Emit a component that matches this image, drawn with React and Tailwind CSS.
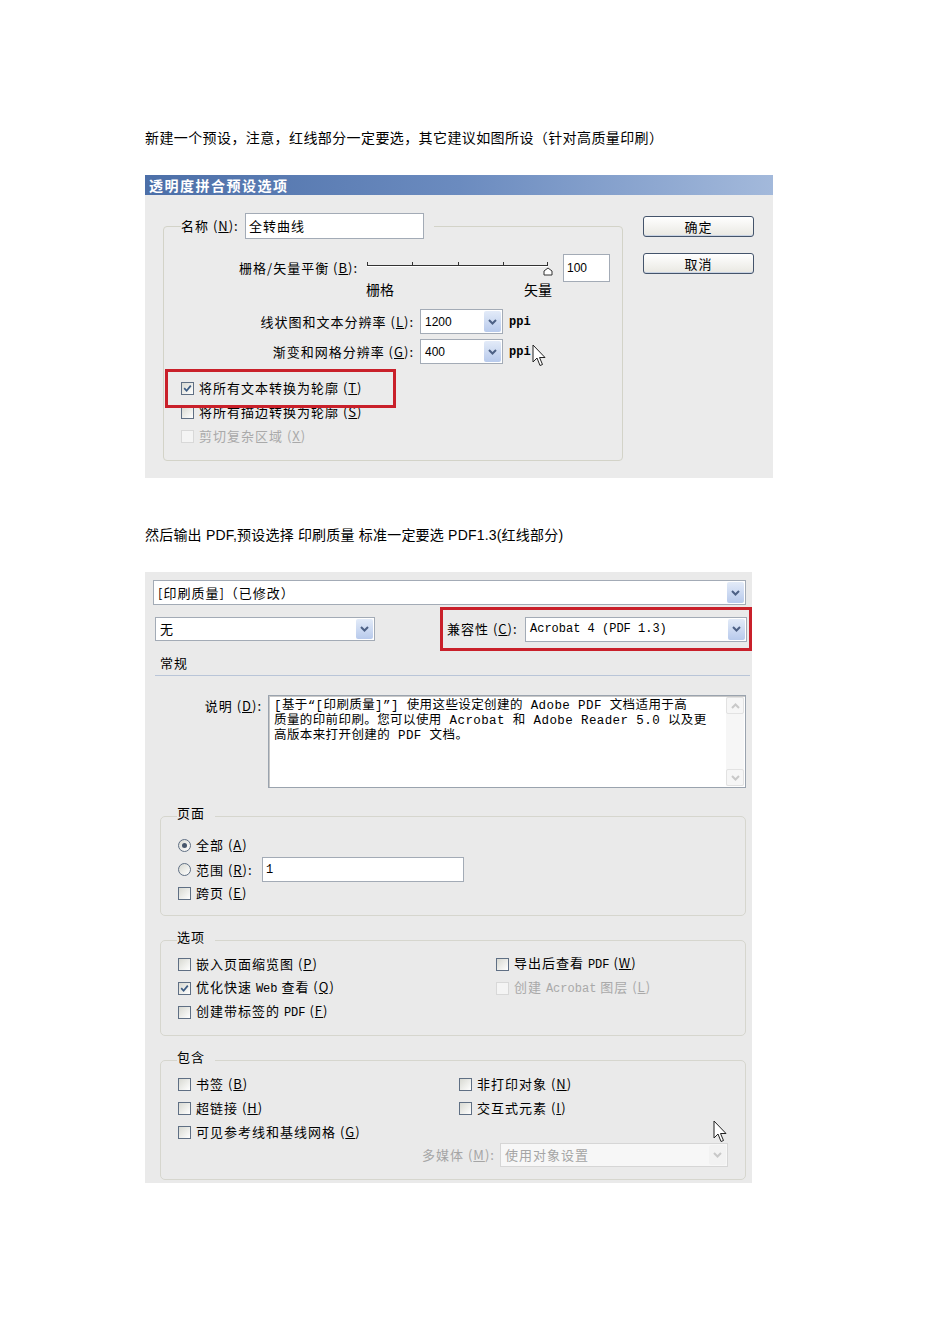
import React from "react";

const CJK = "font-['Noto_Sans_CJK_SC',sans-serif]";

function Chevron({ color = "#4d6185" }) {
  return (
    <svg width="9" height="6" viewBox="0 0 9 6">
      <path d="M1 1 L4.5 4.5 L8 1" stroke={color} strokeWidth="2" fill="none" />
    </svg>
  );
}

function Arrow({ disabled }) {
  return (
    <span
      className={`w-[17px] shrink-0 flex items-center justify-center rounded-[2px] ${
        disabled ? "bg-[#f2f2f2]" : "bg-linear-to-b from-[#e3ebf8] to-[#b8caec]"
      }`}
    >
      <Chevron color={disabled ? "#c8c8c8" : "#4d6185"} />
    </span>
  );
}

function Select({ className, children, textClass = "", disabled }) {
  return (
    <div
      className={`flex items-stretch border p-[1px] ${
        disabled ? "border-[#d6d6d6] bg-[#f7f7f7]" : "border-[#a3abb6] bg-white"
      } ${className}`}
    >
      <div className={`flex-1 flex items-center pl-[3px] whitespace-nowrap overflow-hidden ${textClass}`}>
        {children}
      </div>
      <Arrow disabled={disabled} />
    </div>
  );
}

function Check({ checked, disabled }) {
  return (
    <span
      className={`inline-flex w-[13px] h-[13px] shrink-0 items-center justify-center border ${
        disabled
          ? "border-[#d8d8d8] bg-[#f4f4f4]"
          : "border-[#5f6f84] bg-linear-to-br from-[#d8d9d2] to-white"
      }`}
    >
      {checked && (
        <svg width="9" height="9" viewBox="0 0 9 9">
          <path d="M1.2 4.2 L3.6 6.8 L7.8 1.6" stroke="#3a5a82" strokeWidth="1.7" fill="none" />
        </svg>
      )}
    </span>
  );
}

function Radio({ checked }) {
  return (
    <span className="inline-flex w-[13px] h-[13px] shrink-0 items-center justify-center rounded-full border border-[#5f6f84] bg-linear-to-br from-[#d8d9d2] to-white">
      {checked && <span className="w-[5px] h-[5px] rounded-full bg-[#46566b]" />}
    </span>
  );
}

function CheckRow({ checked, disabled, children }) {
  return (
    <div className={`flex items-center gap-[5px] h-4 leading-4 ${disabled ? "text-[#a9a9a9]" : "text-black"}`}>
      <Check checked={checked} disabled={disabled} />
      <span className="whitespace-nowrap">{children}</span>
    </div>
  );
}

function U({ children }) {
  return <span className="underline underline-offset-1">{children}</span>;
}

function Cursor() {
  return (
    <svg width="16" height="24" viewBox="0 0 16 24">
      <path
        d="M1 1 L1 18 L5 14 L8 21.5 L10.5 20.5 L7.5 13.5 L13 13.5 Z"
        fill="white"
        stroke="#222"
        strokeWidth="1"
        strokeLinejoin="round"
      />
    </svg>
  );
}

function Mono({ children, className = "" }) {
  return <span className={`font-['Liberation_Mono',monospace] tracking-normal ${className}`}>{children}</span>;
}

function Button({ children }) {
  return (
    <div className="w-[111px] h-[21px] border border-[#44546b] rounded-[3px] bg-linear-to-b from-white to-[#e9e8e2] shadow-[inset_0_-1px_0_#c9d3e3] flex items-center justify-center text-[13px] leading-4">
      {children}
    </div>
  );
}

function Dialog1() {
  return (
    <div className={`w-[628px] h-[303px] mt-[29px] bg-[#ebebeb] flex flex-col ${CJK}`}>
      <div className="h-[20px] bg-linear-to-r from-[#4c6fa8] via-[#6b8bbf] to-[#a3b9db] flex items-center pl-[4px] text-white font-bold text-[14px] leading-4 tracking-[1.5px]">
        透明度拼合预设选项
      </div>
      <div className="flex pl-[18px] pt-[18px] text-[13px] tracking-[1px]">
        <fieldset className="w-[460px] border border-[#d3d3c8] rounded-[4px] pb-[16px]">
          <legend className="ml-[17px] pr-[10px]">
            <div className="flex items-center">
              <span className="w-[64px] whitespace-nowrap">
                名称 (<U>N</U>):
              </span>
              <div className="w-[179px] h-[26px] border border-[#a3abb6] bg-white flex items-center pl-[3px]">
                全转曲线
              </div>
            </div>
          </legend>

          <div className="mt-[15px] flex items-center h-[28px]">
            <span className="w-[194px] text-right whitespace-nowrap">
              栅格/矢量平衡 (<U>B</U>):
            </span>
            <svg className="ml-[9px]" width="190" height="28" viewBox="0 0 190 28">
              <line x1="0" y1="11.5" x2="181" y2="11.5" stroke="#333" strokeWidth="1" />
              <line x1="0" y1="12.5" x2="181" y2="12.5" stroke="#fff" strokeWidth="1" />
              {[0.5, 45.5, 91.5, 136.5, 180.5].map((x) => (
                <line key={x} x1={x} y1="8" x2={x} y2="12" stroke="#333" strokeWidth="1" />
              ))}
              <path d="M177 21 L177 17 L181 14 L185 17 L185 21 Z" fill="#fff" stroke="#333" strokeWidth="1" />
            </svg>
            <div className="ml-[6px] w-[47px] h-[28px] border border-[#a3abb6] bg-white flex items-start pt-[4px] pl-[3px] font-['Liberation_Sans',sans-serif] text-[12px] tracking-normal">
              100
            </div>
          </div>
          <div className="mt-[-1px] ml-[202px] w-[186px] flex justify-between h-4 leading-4 tracking-normal text-[14px]">
            <span>栅格</span>
            <span>矢量</span>
          </div>

          <div className="mt-[12px] flex items-center h-[25px]">
            <span className="w-[250px] text-right whitespace-nowrap">
              线状图和文本分辨率 (<U>L</U>):
            </span>
            <Select className="ml-[6px] w-[83px] h-[25px]" textClass="font-['Liberation_Sans',sans-serif] text-[12px] tracking-normal">
              1200
            </Select>
            <Mono className="ml-[6px] text-[12px] font-bold">ppi</Mono>
          </div>
          <div className="relative mt-[5px] flex items-center h-[25px]">
            <span className="w-[250px] text-right whitespace-nowrap">
              渐变和网格分辨率 (<U>G</U>):
            </span>
            <Select className="ml-[6px] w-[83px] h-[25px]" textClass="font-['Liberation_Sans',sans-serif] text-[12px] tracking-normal">
              400
            </Select>
            <Mono className="ml-[6px] text-[12px] font-bold">ppi</Mono>
            <div className="absolute left-[368px] top-[5px]">
              <Cursor />
            </div>
          </div>

          <div className="ml-[17px] mt-[16px] relative">
            <CheckRow checked>
              将所有文本转换为轮廓 (<U>T</U>)
            </CheckRow>
            <div className="absolute left-[-16px] top-[-11px] w-[231px] h-[39px] border-[3px] border-[#c9202a]" />
          </div>
          <div className="ml-[17px] mt-[8px]">
            <CheckRow>
              将所有描边转换为轮廓 (<U>S</U>)
            </CheckRow>
          </div>
          <div className="ml-[17px] mt-[8px]">
            <CheckRow disabled>
              剪切复杂区域 (<U>X</U>)
            </CheckRow>
          </div>
        </fieldset>

        <div className="ml-[20px] mt-[3px] flex flex-col gap-[16px]">
          <Button>确定</Button>
          <Button>取消</Button>
        </div>
      </div>
    </div>
  );
}

function Group({ title, className = "", children }) {
  return (
    <fieldset className={`ml-[15px] w-[586px] border border-[#d6d6ce] rounded-[5px] pl-[17px] ${className}`}>
      <legend className="pr-[10px] -ml-[1px] leading-4 pb-[6px]">{title}</legend>
      {children}
    </fieldset>
  );
}

function Dialog2() {
  return (
    <div className={`relative w-[607px] h-[611px] mt-[28px] bg-[#eaeaea] flex flex-col text-[13px] tracking-[1px] ${CJK}`}>
      <Select className="ml-[8px] mt-[8px] w-[593px] h-[25px]">[印刷质量]（已修改）</Select>

      <div className="mt-[2px] flex items-center h-[44px]">
        <Select className="ml-[10px] w-[220px] h-[24px]">无</Select>
        <div className="ml-auto w-[312px] h-[44px] border-[3px] border-[#c9202a] flex items-center pl-[4px]">
          <span className="w-[74px] whitespace-nowrap">
            兼容性 (<U>C</U>):
          </span>
          <Select className="ml-[4px] w-[222px] h-[25px]">
            <Mono className="text-[12px]">Acrobat 4 (PDF 1.3)</Mono>
          </Select>
        </div>
      </div>

      <div className="ml-[10px] mr-[2px] mt-[4px] h-[21px] border-b border-[#b9c5d8] pl-[5px] leading-4">常规</div>

      <div className="mt-[19px] flex">
        <span className="w-[117px] text-right pt-[3px] leading-4 whitespace-nowrap">
          说明 (<U>D</U>):
        </span>
        <div className="ml-[6px] w-[478px] h-[93px] border border-[#9aa3ae] bg-white shadow-[inset_1px_1px_0_#c8c8c8] flex">
          <div className="flex-1 min-w-0 pl-[5px] pt-[3px] font-['Liberation_Mono','Noto_Sans_CJK_SC',monospace] text-[12.5px] tracking-[0.4px] leading-[15px] whitespace-nowrap">
            <div>[基于“[印刷质量]”] 使用这些设定创建的 Adobe PDF 文档适用于高</div>
            <div>质量的印前印刷。您可以使用 Acrobat 和 Adobe Reader 5.0 以及更</div>
            <div>高版本来打开创建的 PDF 文档。</div>
          </div>
          <div className="w-[18px] shrink-0 mr-[1px] my-[1px] flex flex-col justify-between bg-[#f6f6f6]">
            <div className="h-[17px] border border-[#e2e2e2] rounded-[2px] flex items-center justify-center">
              <svg width="9" height="6" viewBox="0 0 9 6">
                <path d="M1 5 L4.5 1.5 L8 5" stroke="#c9c9c9" strokeWidth="2" fill="none" />
              </svg>
            </div>
            <div className="h-[17px] border border-[#e2e2e2] rounded-[2px] flex items-center justify-center">
              <Chevron color="#c9c9c9" />
            </div>
          </div>
        </div>
      </div>

      <Group title="页面" className="mt-[17px] pb-[14px]">
        <div className="mt-[10px] flex items-center gap-[5px] h-4 leading-4">
          <Radio checked />
          <span>
            全部 (<U>A</U>)
          </span>
        </div>
        <div className="mt-[4px] flex items-center h-[25px] leading-4">
          <Radio />
          <span className="ml-[5px] w-[66px] whitespace-nowrap">
            范围 (<U>R</U>):
          </span>
          <div className="w-[202px] h-[25px] border border-[#a3abb6] bg-white flex items-center pl-[3px]">
            <Mono className="text-[12px]">1</Mono>
          </div>
        </div>
        <div className="mt-[3px]">
          <CheckRow>
            跨页 (<U>E</U>)
          </CheckRow>
        </div>
      </Group>

      <Group title="选项" className="mt-[13px] pb-[15px]">
        <div className="mt-[5px] grid grid-cols-[318px_1fr] gap-y-[8px]">
          <CheckRow>
            嵌入页面缩览图 (<U>P</U>)
          </CheckRow>
          <CheckRow>
            导出后查看 <Mono className="text-[12px]">PDF</Mono> (<U>W</U>)
          </CheckRow>
          <CheckRow checked>
            优化快速 <Mono className="text-[12px]">Web</Mono> 查看 (<U>Q</U>)
          </CheckRow>
          <CheckRow disabled>
            创建 <Mono className="text-[12px]">Acrobat</Mono> 图层 (<U>L</U>)
          </CheckRow>
          <CheckRow>
            创建带标签的 <Mono className="text-[12px]">PDF</Mono> (<U>F</U>)
          </CheckRow>
        </div>
      </Group>

      <Group title="包含" className="mt-[13px] pb-[12px]">
        <div className="mt-[5px] grid grid-cols-[281px_1fr] gap-y-[8px]">
          <CheckRow>
            书签 (<U>B</U>)
          </CheckRow>
          <CheckRow>
            非打印对象 (<U>N</U>)
          </CheckRow>
          <CheckRow>
            超链接 (<U>H</U>)
          </CheckRow>
          <CheckRow>
            交互式元素 (<U>I</U>)
          </CheckRow>
          <div className="col-span-2">
            <CheckRow>
              可见参考线和基线网格 (<U>G</U>)
            </CheckRow>
          </div>
        </div>
        <div className="mt-[3px] flex items-center h-[24px]">
          <span className="ml-[244px] w-[78px] text-[#a5a5a5] whitespace-nowrap">
            多媒体 (<U>M</U>):
          </span>
          <Select disabled className="w-[228px] h-[24px]" textClass="text-[#a5a5a5]">
            使用对象设置
          </Select>
        </div>
      </Group>

      <div className="absolute left-[568px] top-[548px]">
        <Cursor />
      </div>
    </div>
  );
}

export default function App() {
  return (
    <div className="w-[950px] h-[1344px] bg-white pl-[145px] pt-[128px] font-['Liberation_Sans','Noto_Sans_CJK_SC',sans-serif] text-black">
      <p className={`h-[18px] leading-[18px] text-[14px] tracking-[0.4px] whitespace-nowrap ${CJK}`}>
        新建一个预设，注意，红线部分一定要选，其它建议如图所设（针对高质量印刷）
      </p>
      <Dialog1 />
      <p className="mt-[48px] h-[18px] leading-[18px] text-[14px] tracking-[0.2px] whitespace-nowrap">
        然后输出 PDF,预设选择 印刷质量 标准一定要选 PDF1.3(红线部分)
      </p>
      <Dialog2 />
    </div>
  );
}
